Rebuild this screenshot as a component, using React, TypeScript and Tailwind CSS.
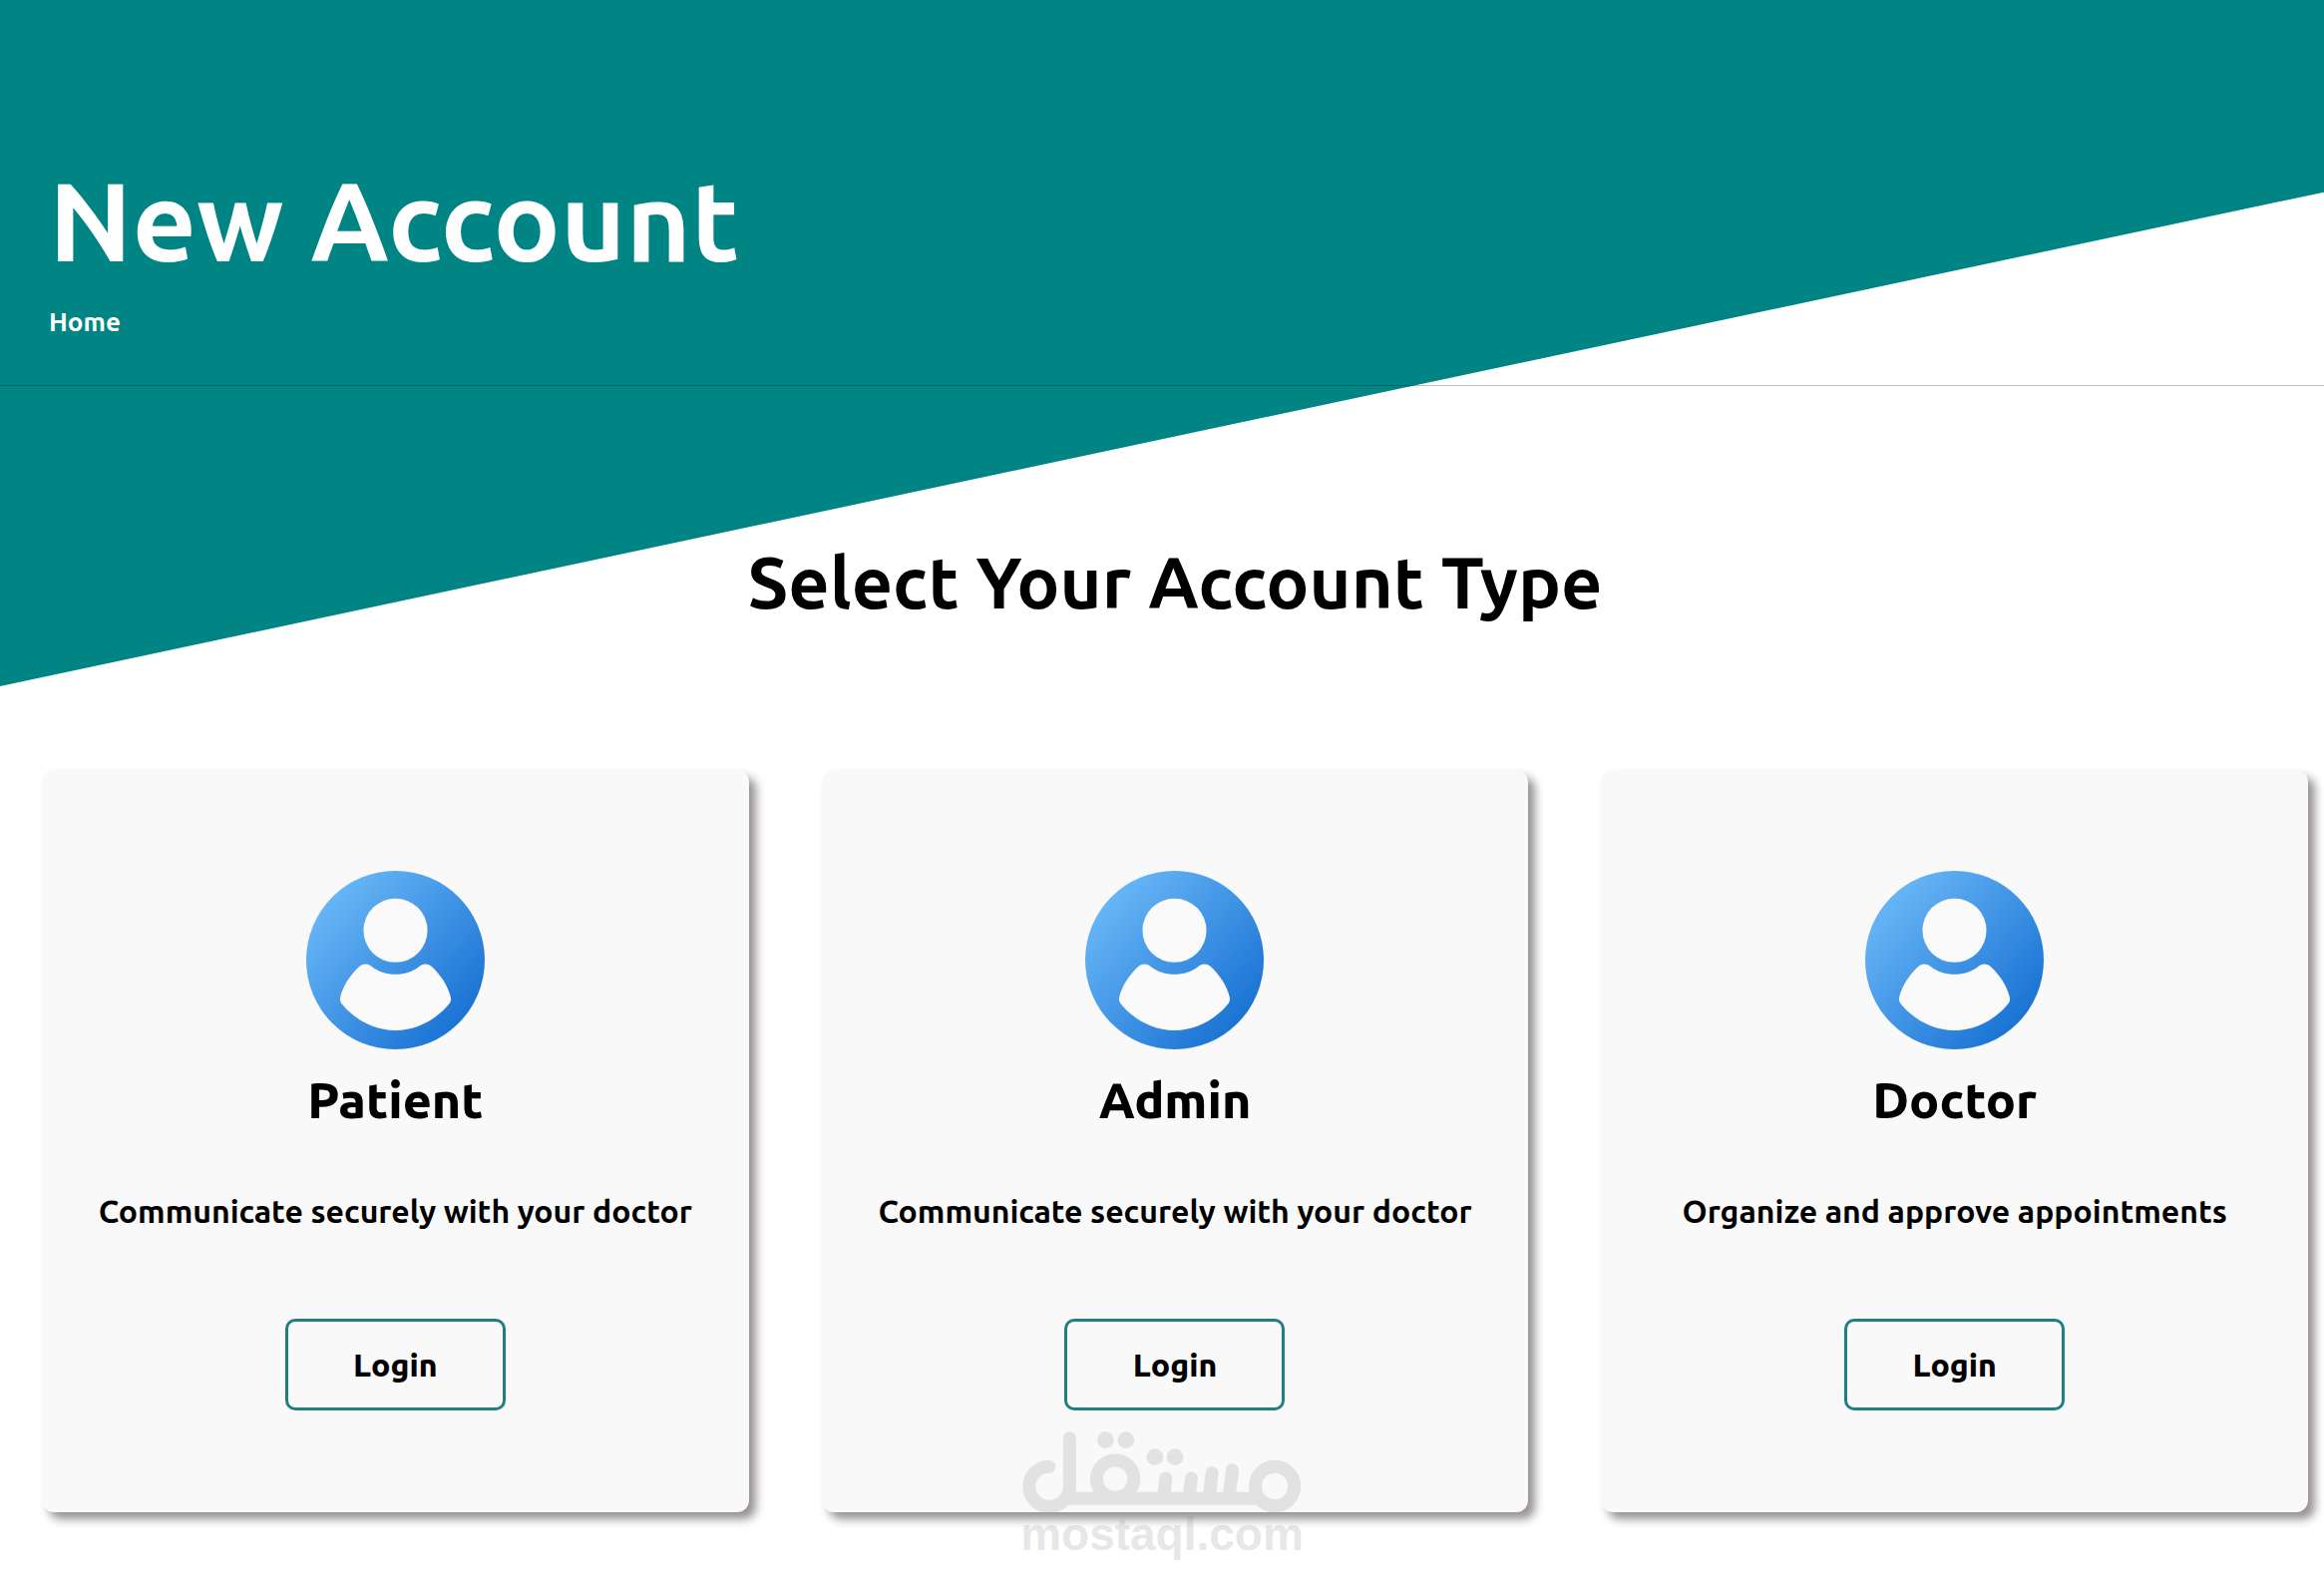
interface AccountType {
  title: string;
  description: string;
}

const accountTypes: AccountType[] = [
  { title: "Patient", description: "Communicate securely with your doctor" },
  { title: "Admin", description: "Communicate securely with your doctor" },
  { title: "Doctor", description: "Organize and approve appointments" },
];

function UserIcon({ id }: { id: string }) {
  return (
    <svg className="h-[179px] w-[179px]" viewBox="0 0 536 536" aria-hidden="true">
      <defs>
        <linearGradient id={id} x1="0.1" y1="0.15" x2="0.85" y2="0.85">
          <stop offset="0" stopColor="#69b7f7" />
          <stop offset="1" stopColor="#1b74d4" />
        </linearGradient>
      </defs>
      <circle cx="268" cy="268" r="268" fill={`url(#${id})`} />
      <g fill="#fafafa">
        <circle cx="268" cy="179" r="96" />
        <path d="M178 280Q188 280 196 287C216 303 241 311 268 311C295 311 320 303 340 287Q348 280 358 280Q368 280 375 286C404 312 425 345 434 380Q436 390 430 398C390 448 330 479 268 479C206 479 146 448 106 398Q100 390 102 380C111 345 132 312 161 286Q168 280 178 280Z" />
      </g>
    </svg>
  );
}

function AccountCard({ title, description }: AccountType) {
  return (
    <div className="flex flex-col items-center rounded-xl bg-[#f9f9f9] px-8 pt-[101px] pb-[102px] shadow-[7px_7px_10px_#989292]">
      <UserIcon id={`avatar-${title}`} />
      <h3 className="mt-5 text-[50px] leading-[60px] font-extrabold">{title}</h3>
      <p className="mt-[60px] text-center text-[32px] leading-[44px] font-semibold">{description}</p>
      <button
        type="button"
        className="mt-[86px] h-[92px] w-[221px] rounded-[10px] border-3 border-[#1f8080] text-[32px] leading-[44px] font-extrabold"
      >
        Login
      </button>
    </div>
  );
}

function Watermark() {
  return (
    <div className="pointer-events-none absolute bottom-[35px] left-1/2 flex -translate-x-1/2 flex-col items-center text-[#8a8a8a] opacity-20">
      <svg className="h-[81px] w-[280px]" viewBox="135 105 840 243" fill="none" stroke="currentColor" strokeWidth="39" aria-hidden="true">
        <path d="M277 125V270A61 60 0 1 1 215 211" strokeLinecap="round" />
        <path d="M255 307H850" />
        <circle cx="414" cy="248" r="56" />
        <circle cx="894" cy="270" r="59" />
        <path d="M566 246L559 307M643 246L636 307M705 230L696 307M766 221L756 307" strokeLinecap="round" />
        <g fill="currentColor" stroke="none">
          <circle cx="385" cy="131" r="25" />
          <circle cx="446" cy="131" r="25" />
          <circle cx="533" cy="182" r="25" />
          <circle cx="594" cy="182" r="25" />
        </g>
      </svg>
      <span className="font-['Liberation_Sans',sans-serif] text-[46px] leading-[45px] font-bold">mostaql.com</span>
    </div>
  );
}

export default function App() {
  return (
    <div className="relative isolate min-h-screen bg-white pb-20 font-[Ubuntu,'Noto_Sans',sans-serif] text-black">
      {/* Slanted backdrop */}
      <div className="absolute inset-x-0 top-0 -z-10 h-[688px] bg-[#008584] [clip-path:polygon(0_0,100%_0,100%_28%,0_100%)]" />

      <header className="border-b border-black/25 px-[49px] pt-[161px] pb-[43px] text-white">
        <h1 className="text-[112px] leading-[120px] font-semibold">New Account</h1>
        <a href="#home" className="mt-[22px] inline-block text-[26px] leading-[40px] font-semibold">
          Home
        </a>
      </header>

      <main className="pr-4 pl-[42px]">
        <h2 className="mt-[157px] text-center text-[72px] leading-[80px] font-semibold">Select Your Account Type</h2>
        <div className="mt-[148px] grid grid-cols-3 gap-[73px]">
          {accountTypes.map((account) => (
            <AccountCard key={account.title} {...account} />
          ))}
        </div>
      </main>

      <Watermark />
    </div>
  );
}
